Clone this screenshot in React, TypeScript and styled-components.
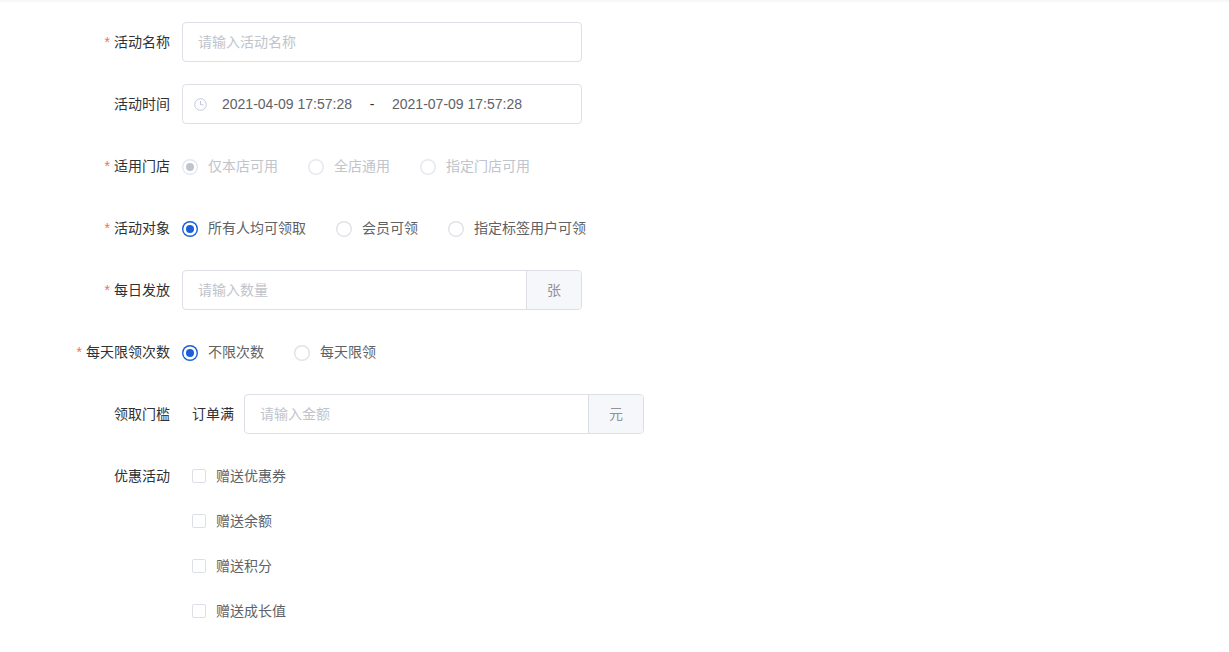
import React from "react";
import styled, { createGlobalStyle } from "styled-components";

const Global = createGlobalStyle`
  html, body { margin: 0; padding: 0; background: #fff; }
  body { font-family: "Noto Sans CJK SC", "Liberation Sans", Arial, sans-serif; font-size: 14px; color: #515a6e; }
`;

const Page = styled.div`
  width: 1229px;
  height: 652px;
  overflow: hidden;
  box-sizing: border-box;
  padding-top: 20px;
  background: #fff;
  border-top: 2px solid #f8f8f9;
`;

const Row = styled.div`
  display: flex;
  align-items: flex-start;
  margin-bottom: 22px;
`;

const Label = styled.div<{ $required?: boolean }>`
  width: 170px;
  flex: none;
  margin-right: 12px;
  height: 40px;
  line-height: 38px;
  text-align: right;
  color: #303133;
  white-space: nowrap;
  &::before {
    content: ${(p) => (p.$required ? '"*"' : '""')};
    color: #f56c6c;
    margin-right: 4px;
    font-family: "Liberation Sans", sans-serif;
  }
`;

const Field = styled.div`
  width: 400px;
  height: 40px;
  box-sizing: border-box;
  border: 1px solid #dcdfe6;
  border-radius: 4px;
  display: flex;
  align-items: center;
  background: #fff;
`;

const TextInput = styled.input`
  flex: 1;
  min-width: 0;
  height: 100%;
  box-sizing: border-box;
  border: 0;
  outline: 0;
  background: transparent;
  padding: 0 15px 2px;
  font: inherit;
  color: #606266;
  &::placeholder { color: #c0c4cc; opacity: 1; }
`;

const Append = styled.div`
  width: 55px;
  height: 100%;
  flex: none;
  box-sizing: border-box;
  border-left: 1px solid #dcdfe6;
  border-radius: 0 3px 3px 0;
  background: #f5f7fa;
  color: #909399;
  padding-bottom: 2px;
  display: flex;
  align-items: center;
  justify-content: center;
`;

const ClockSlot = styled.span`
  width: 13px;
  height: 13px;
  margin: 0 15px 0 11px;
  flex: none;
  display: flex;
  color: #c0c9dc;
`;

const DateText = styled.span`
  font-family: "Liberation Sans", Arial, sans-serif;
  color: #606266;
  white-space: nowrap;
  width: 130px;
`;

const DateSep = styled.span`
  font-family: "Liberation Sans", Arial, sans-serif;
  color: #303133;
  width: 40px;
  text-align: center;
`;

const Choices = styled.div`
  display: flex;
  align-items: center;
  height: 40px;
  gap: 30px;
`;

const Radio = styled.label<{ $disabled?: boolean }>`
  display: flex;
  align-items: center;
  color: ${(p) => (p.$disabled ? "#c0c4cc" : "#606266")};
  white-space: nowrap;
`;

const Caption = styled.span`
  line-height: 20px;
  margin-bottom: 2px;
`;

const Dot = styled.span<{ $on?: boolean; $disabled?: boolean }>`
  width: 16px;
  height: 16px;
  border-radius: 50%;
  margin: 2px 10px 0 0;
  flex: none;
  display: flex;
  align-items: center;
  justify-content: center;
  background: #fff;
  box-shadow: inset 0 0 0 1.4px
    ${(p) => (p.$on && !p.$disabled ? "#1a5fd8" : p.$disabled ? "#e6e8ef" : "#e0e2e9")};
  &::after {
    content: "";
    display: ${(p) => (p.$on ? "block" : "none")};
    width: 8px;
    height: 8px;
    border-radius: 50%;
    background: ${(p) => (p.$disabled ? "#c0c4cc" : "#1a5fd8")};
  }
`;

const Threshold = styled.div`
  display: flex;
  align-items: center;
  height: 40px;
  padding-left: 10px;
  gap: 10px;
  color: #303133;
`;

const CheckList = styled.div`
  display: flex;
  flex-direction: column;
  padding-left: 10px;
  gap: 5px;
`;

const Check = styled.label`
  display: flex;
  align-items: center;
  height: 40px;
  color: #606266;
  white-space: nowrap;
`;

const Box = styled.span`
  width: 14px;
  height: 14px;
  box-sizing: border-box;
  border: 1px solid #dcdfe6;
  border-radius: 2px;
  margin-right: 10px;
  flex: none;
  background: #fff;
`;

const Clock = () => (
  <svg width="13" height="13" viewBox="0 0 13 13" fill="none" stroke="currentColor" strokeWidth="1">
    <circle cx="6.5" cy="6.5" r="5.8" />
    <path d="M6.5 3v3.8h3" />
  </svg>
);

export default function App() {
  return (
    <Page>
      <Global />
      <Row>
        <Label $required>活动名称</Label>
        <Field><TextInput placeholder="请输入活动名称" /></Field>
      </Row>
      <Row>
        <Label>活动时间</Label>
        <Field>
          <ClockSlot><Clock /></ClockSlot>
          <DateText>2021-04-09 17:57:28</DateText>
          <DateSep>-</DateSep>
          <DateText>2021-07-09 17:57:28</DateText>
        </Field>
      </Row>
      <Row>
        <Label $required>适用门店</Label>
        <Choices>
          <Radio $disabled><Dot $on $disabled /><Caption>仅本店可用</Caption></Radio>
          <Radio $disabled><Dot $disabled /><Caption>全店通用</Caption></Radio>
          <Radio $disabled><Dot $disabled /><Caption>指定门店可用</Caption></Radio>
        </Choices>
      </Row>
      <Row>
        <Label $required>活动对象</Label>
        <Choices>
          <Radio><Dot $on /><Caption>所有人均可领取</Caption></Radio>
          <Radio><Dot /><Caption>会员可领</Caption></Radio>
          <Radio><Dot /><Caption>指定标签用户可领</Caption></Radio>
        </Choices>
      </Row>
      <Row>
        <Label $required>每日发放</Label>
        <Field>
          <TextInput placeholder="请输入数量" />
          <Append>张</Append>
        </Field>
      </Row>
      <Row>
        <Label $required>每天限领次数</Label>
        <Choices>
          <Radio><Dot $on /><Caption>不限次数</Caption></Radio>
          <Radio><Dot /><Caption>每天限领</Caption></Radio>
        </Choices>
      </Row>
      <Row>
        <Label>领取门槛</Label>
        <Threshold>
          <Caption>订单满</Caption>
          <Field>
            <TextInput placeholder="请输入金额" />
            <Append>元</Append>
          </Field>
        </Threshold>
      </Row>
      <Row>
        <Label>优惠活动</Label>
        <CheckList>
          <Check><Box /><Caption>赠送优惠券</Caption></Check>
          <Check><Box /><Caption>赠送余额</Caption></Check>
          <Check><Box /><Caption>赠送积分</Caption></Check>
          <Check><Box /><Caption>赠送成长值</Caption></Check>
        </CheckList>
      </Row>
    </Page>
  );
}
